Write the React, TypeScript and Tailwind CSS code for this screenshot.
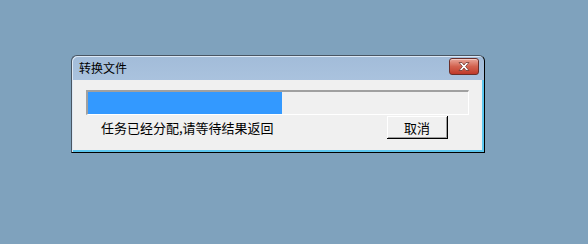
export default function App(): React.ReactElement {
  return (
    <div
      className="w-[588px] h-[244px] bg-[#7fa2bd] pt-[55px] pl-[71px]"
      style={{ fontFamily: '"Noto Sans CJK SC", "Noto Sans", sans-serif' }}
    >
      <div className="w-[414px] h-[98px] flex flex-col border border-[#4a5663] border-r-black border-b-black rounded-t-[6px] bg-gradient-to-b from-[#a2bcd9] to-[#c1d5ec] shadow-[inset_1px_1px_0_#dce8f5]">
        {/* title bar */}
        <div className="h-[24px] flex items-center justify-between pl-[7px] pr-[5px]">
          <span className="text-[12px] leading-none text-black">转换文件</span>
          <button className="w-[30px] h-[17px] mt-[-4px] flex items-center justify-center rounded-[3px] border border-[#6b2f2a] bg-gradient-to-b from-[#e8a69a] via-[#d2624f] to-[#c0392b] shadow-[inset_0_1px_0_#f3c8c0]">
            <svg width="14" height="11" viewBox="0 0 14 11">
              <path
                d="M2 1.5 L5 1.5 L7 4 L9 1.5 L12 1.5 L8.6 5.5 L12 9.5 L9 9.5 L7 7 L5 9.5 L2 9.5 L5.4 5.5 Z"
                fill="#ffffff"
                stroke="#6e3a34"
                strokeWidth="0.8"
                strokeLinejoin="round"
              />
            </svg>
          </button>
        </div>

        {/* client area */}
        <div className="flex-1 ml-[1px] border-r-2 border-b-2 border-[#5cc6ee]">
          <div className="h-full bg-[#f0f0f0] pt-[10px] pl-[13px] pr-[34px]">
            <div className="w-[383px] h-[25px] border-t-2 border-l-2 border-[#a0a0a0] border-r border-b border-r-white border-b-white">
              <div className="h-full w-[194px] bg-[#3399ff]" />
            </div>
            <div className="flex items-center mt-[1px]">
              <span className="ml-[15px] text-[13px] leading-none text-black">
                任务已经分配,请等待结果返回
              </span>
              <div className="ml-auto w-[61px] h-[23px] border-r border-b border-black">
                <div className="h-full border-t border-l border-white">
                  <div className="h-full border-r border-b border-[#a0a0a0] bg-[#f0f0f0] flex items-center justify-center text-[13px] leading-none text-black">
                    取消
                  </div>
                </div>
              </div>
            </div>
          </div>
        </div>
      </div>
    </div>
  );
}
